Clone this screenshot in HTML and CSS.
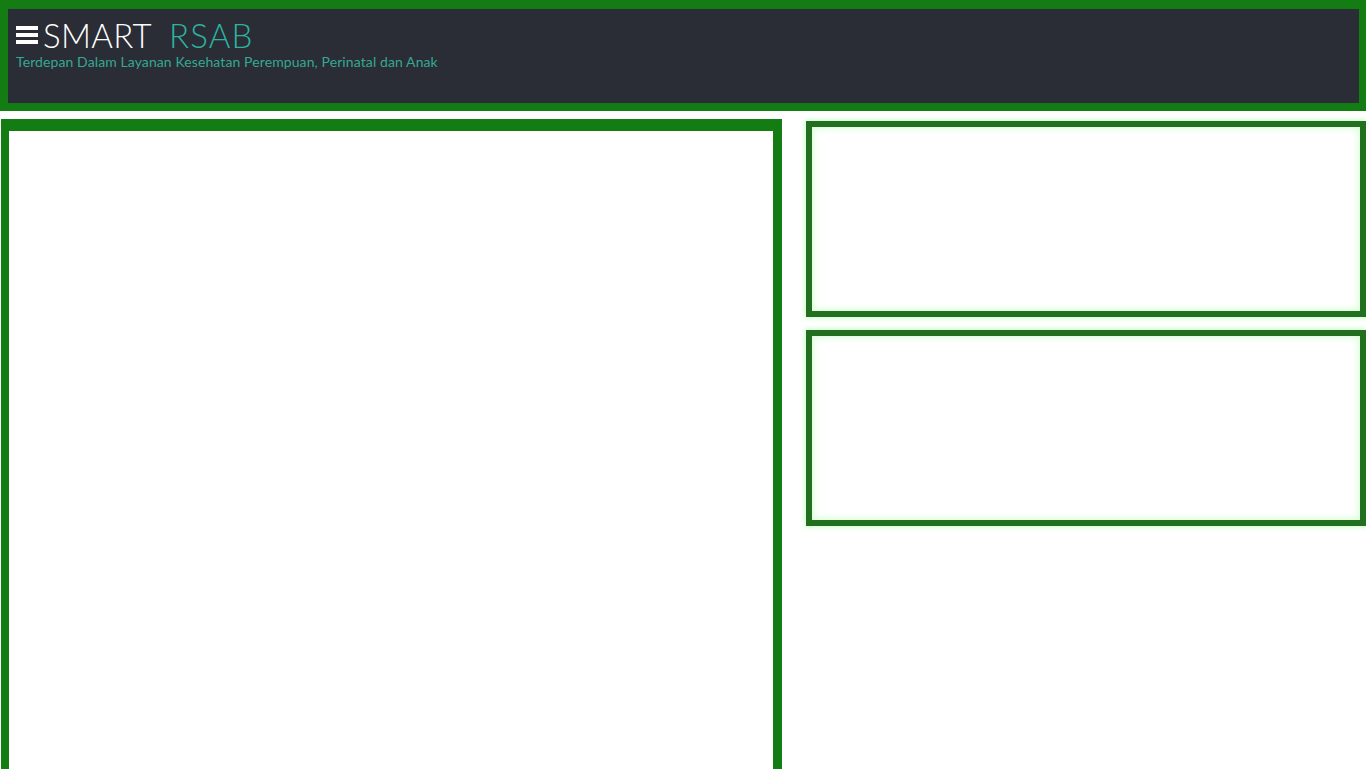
FILE: index.html
```html
<!DOCTYPE html>
<html lang="id">
<head>
<meta charset="utf-8">
<title>SMART RSAB</title>
<link rel="stylesheet" href="styles.css">
</head>
<body>
<header class="topbar">
  <div class="topbar-inner">
    <div class="brand">
      <span class="hamburger" aria-hidden="true"><i></i><i></i><i></i></span>
      <span class="brand-smart">SMART</span>
      <span class="brand-rsab">RSAB</span>
    </div>
    <div class="tagline">Terdepan Dalam Layanan Kesehatan Perempuan, Perinatal dan Anak</div>
  </div>
</header>
<main class="layout">
  <section class="panel-main"></section>
  <aside class="side">
    <div class="card"></div>
    <div class="card"></div>
  </aside>
</main>
</body>
</html>
```
FILE: styles.css
```css
html, body {
  margin: 0;
  padding: 0;
  background: #ffffff;
  font-family: Lato, "Open Sans", "Liberation Sans", sans-serif;
  overflow: hidden;
}

.topbar {
  background: #137c13;
  padding: 9px 7px 8px 8px;
}

.topbar-inner {
  background: #2a2d35;
  height: 94px;
  box-sizing: border-box;
  padding: 11px 8px 0 8px;
}

.brand {
  display: flex;
  align-items: center;
  height: 30px;
}

.hamburger {
  display: flex;
  flex-direction: column;
  gap: 3px;
  width: 22px;
  margin-right: 5px;
}

.hamburger i {
  display: block;
  height: 4px;
  background: #ffffff;
}

.brand-smart {
  color: #ffffff;
  font-size: 33px;
  font-weight: 300;
  letter-spacing: 0.3px;
  line-height: 30px;
}

.brand-rsab {
  color: #2db3a0;
  font-size: 33px;
  font-weight: 300;
  letter-spacing: 1.2px;
  line-height: 30px;
  margin-left: 17px;
}

.tagline {
  color: #35a893;
  font-size: 14px;
  letter-spacing: 0.1px;
  margin-top: 4px;
  line-height: 16px;
}

.layout {
  display: grid;
  grid-template-columns: 781px 560px;
  column-gap: 24px;
  margin-top: 8px;
  padding-left: 1px;
}

.panel-main {
  border-style: solid;
  border-color: #137c13;
  border-width: 12px 9px 0 8px;
  height: 639px;
  background: #ffffff;
}

.side {
  display: flex;
  flex-direction: column;
  gap: 13px;
  padding-top: 2px;
}

.card {
  height: 196px;
  box-sizing: border-box;
  border: 6px solid #22701f;
  background: #ffffff;
  box-shadow: 0 0 5px 1px #c6ffc6, inset 0 0 6px 2px #d8ffd8;
}
```
